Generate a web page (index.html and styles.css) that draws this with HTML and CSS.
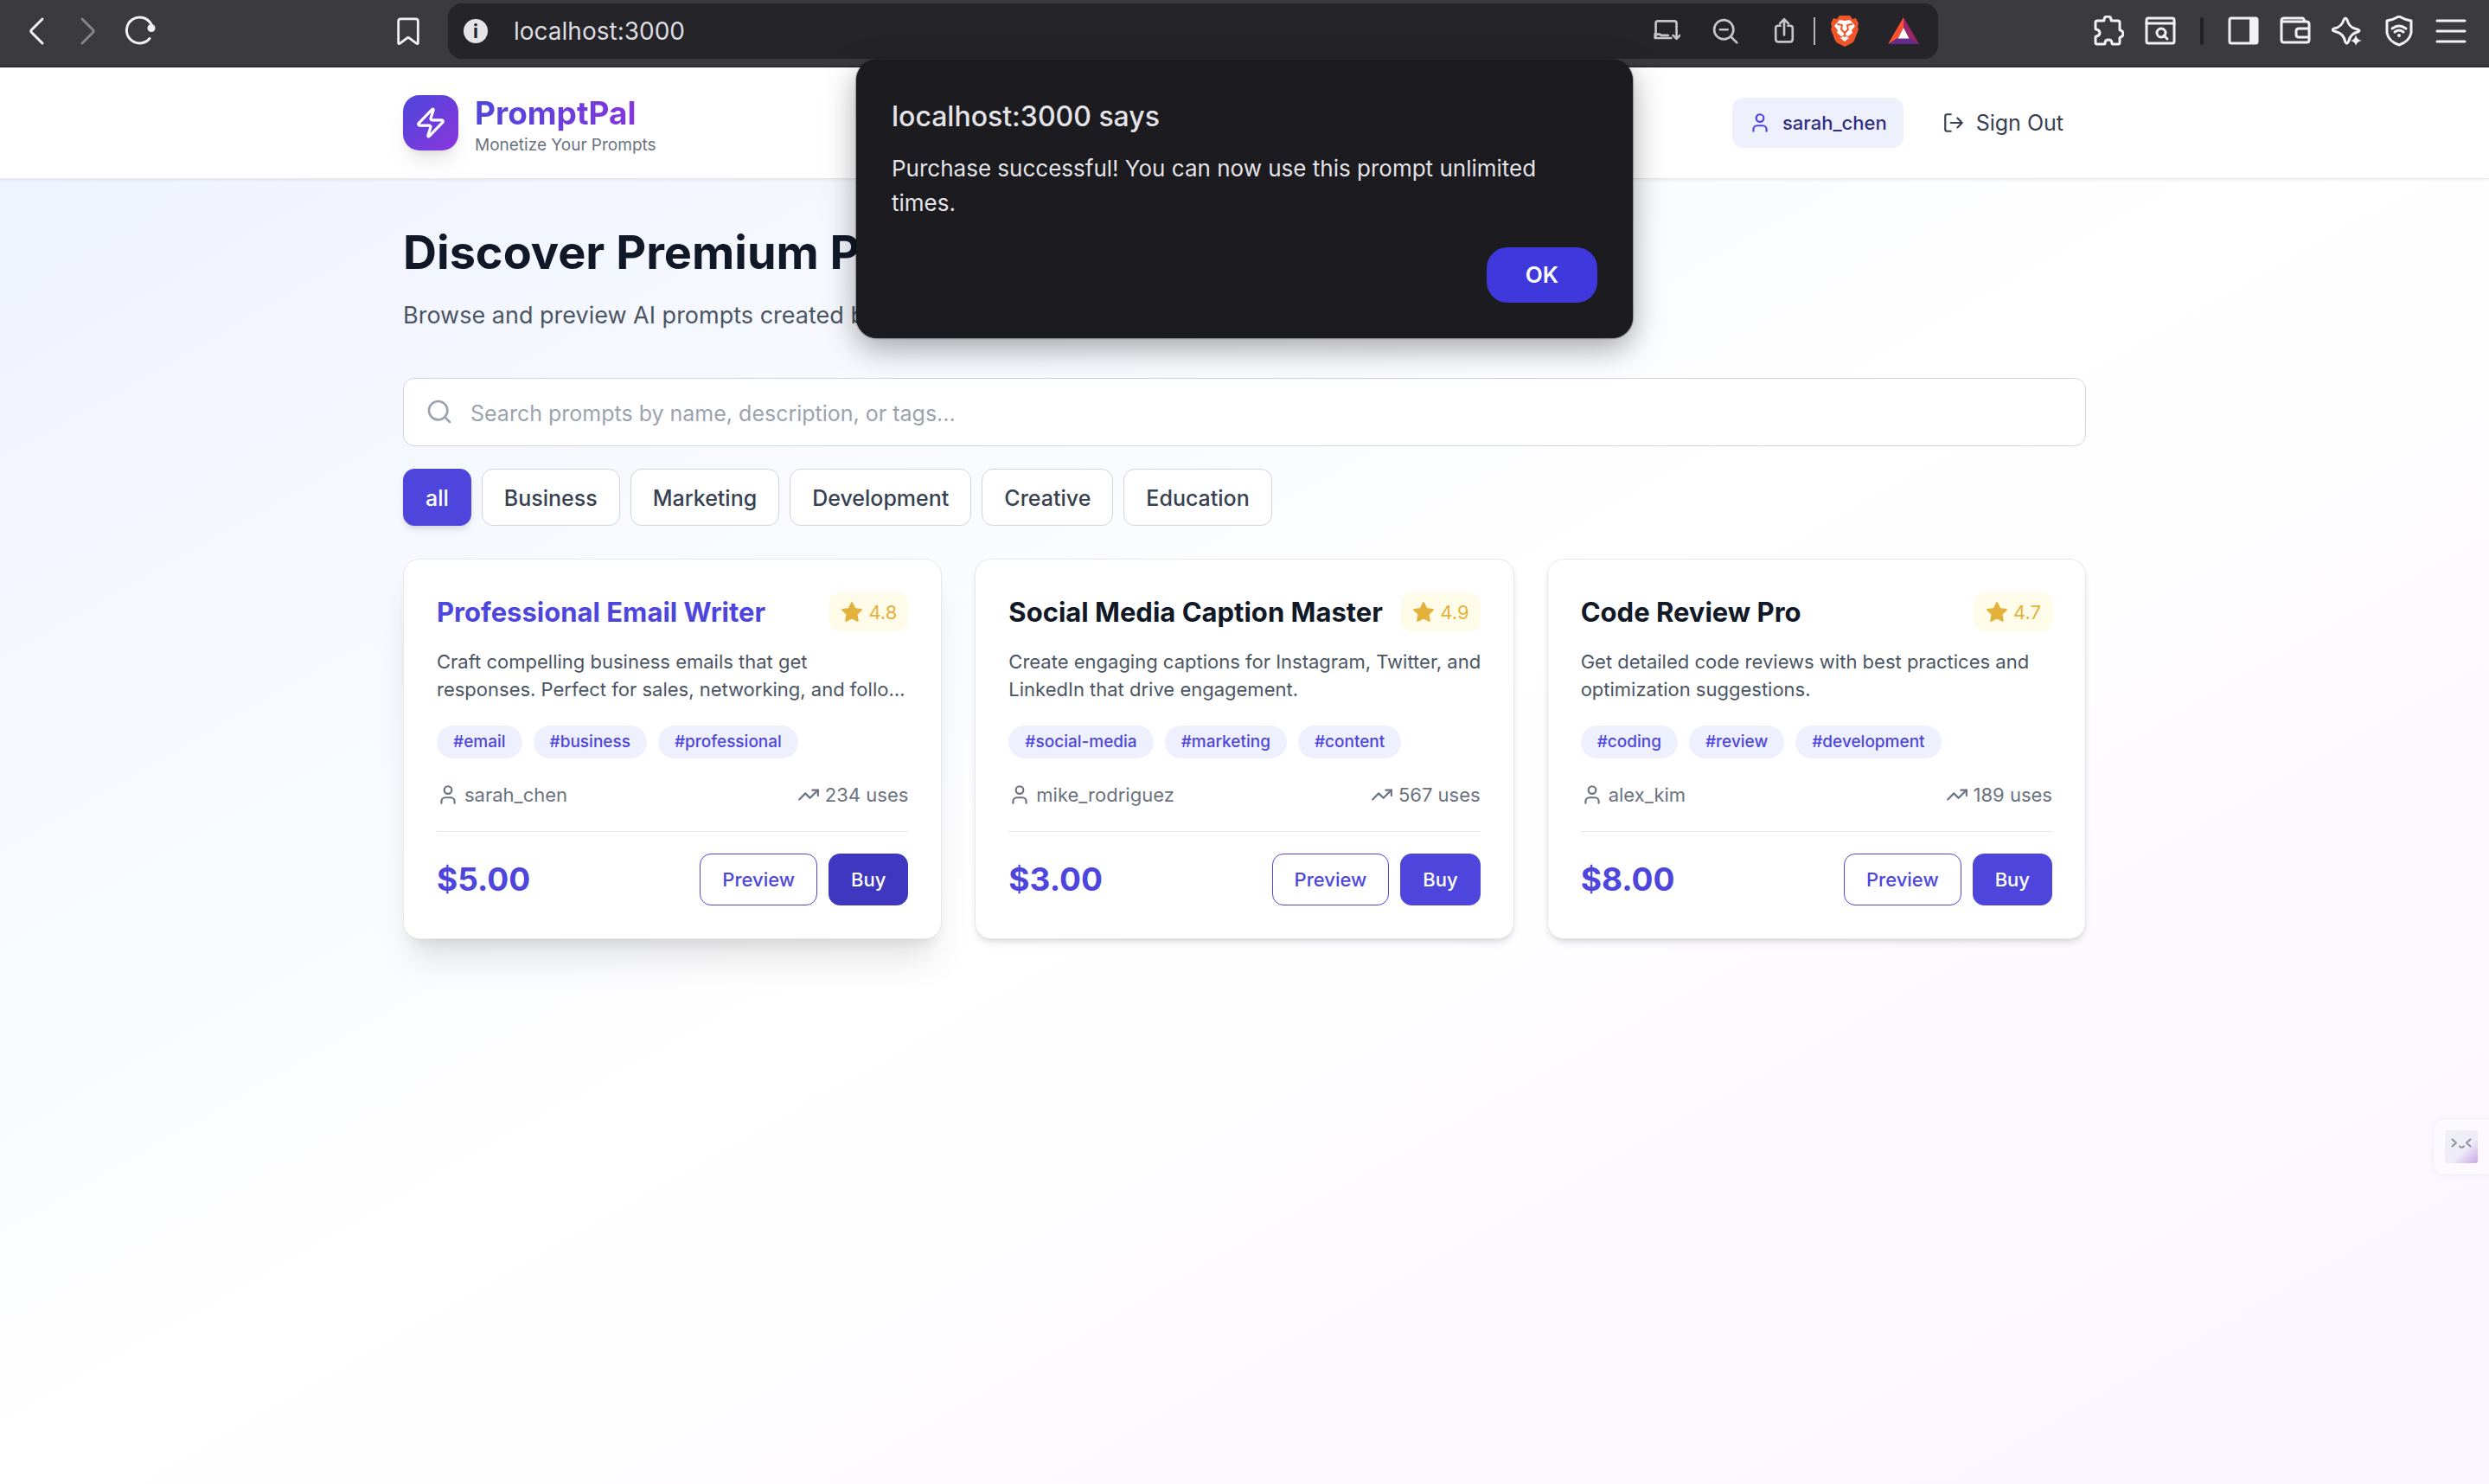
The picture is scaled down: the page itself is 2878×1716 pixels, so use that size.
FILE: index.html
```html
<!doctype html>
<html lang="en">

<head>
	<meta charset="utf-8">
	<title>PromptPal</title>
	<link rel="stylesheet" href="styles.css">
</head>

<body>
	<!-- shared icons -->
	<svg class="defs" aria-hidden="true">
		<symbol id="i-user" viewBox="0 0 24 24">
			<path d="M19 21v-2a4 4 0 0 0-4-4H9a4 4 0 0 0-4 4v2" />
			<circle cx="12" cy="7" r="4" />
		</symbol>
		<symbol id="i-trend" viewBox="0 0 24 24">
			<path d="M22 7l-8.500 8.500-5-5L2 17" />
			<path d="M16 7h6v6" />
		</symbol>
		<symbol id="i-star" viewBox="0 0 24 24">
			<path fill="currentColor" d="M12 2l3.090 6.260L22 9.270l-5 4.870 1.180 6.880L12 17.770l-6.180 3.250L7 14.140 2 9.270l6.910-1.010z" />
		</symbol>
	</svg>

	<div class="toolbar">
		<button class="tool" aria-label="Back"><svg viewBox="0 0 36 36"><path d="M25 4L12.500 16.500q-1.500 1.500 0 3L25 32" /></svg></button>
		<button class="tool dim" aria-label="Forward"><svg viewBox="0 0 36 36"><path d="M11 4l12.500 12.500q1.500 1.500 0 3L11 32" /></svg></button>
		<button class="tool" aria-label="Reload"><svg viewBox="0 0 36 36"><path d="M29 26.500A15 15 0 1 1 31 10.500" /><circle class="solid" cx="31" cy="14.500" r="4.500" /></svg></button>
		<button class="tool bookmark" aria-label="Bookmark"><svg viewBox="0 0 36 36"><path d="M9 3h18q3 0 3 3v26q0 2.500-2 1l-8.500-6.500q-1.500-1-3 0L8 33q-2 1.500-2-1V6q0-3 3-3z" /></svg></button>
		<div class="address">
			<span class="info" aria-hidden="true">i</span>
			<input class="url" type="text" value="localhost:3000" aria-label="Address">
			<button class="tool" aria-label="Install"><svg viewBox="0 0 36 36"><path d="M31 14V8q0-3-3-3H7Q4 5 4 8v18M3 22h6l2 1.500h9M3 22v5h21" /><path d="M31 16v11M26.500 23.500L31 28l4.500-4.500" /></svg></button>
			<button class="tool" aria-label="Zoom out"><svg viewBox="0 0 36 36"><circle cx="16" cy="16" r="12.500" /><path d="M25 25l8 8M11 16h10" /></svg></button>
			<button class="tool" aria-label="Share"><svg viewBox="0 0 36 36"><path d="M13 11h-3q-3 0-3 3v14q0 4 4 4h14q4 0 4-4V14q0-3-3-3h-3M18 23V3M12.500 8L18 2.500 23.500 8" /></svg></button>
			<span class="rule"></span>
			<button class="tool shield" aria-label="Brave Shields"><svg viewBox="0 0 36 36"><path fill="#f1562b" d="M12 0h12l3 4 4-1 3 6-1 4 1 3-5 13q-1 2-3 3l-8 4-8-4q-2-1-3-3L2 16l1-3-1-4 3-6 4 1z" /><path fill="#fff" d="M18 6l6-1 6 7-4 5 1 3-5 4-4-2-4 2-5-4 1-3-4-5 6-7zM18 23l5 3-5 4-5-4z" /><path fill="none" stroke="#f1562b" stroke-width="2" d="M10 10l5 1-1 5 4 4 4-4-1-5 5-1M18 20v4" /></svg></button>
			<button class="tool bat" aria-label="Rewards"><svg viewBox="0 0 36 36"><path fill="#ff5130" d="M18 2v12l-6.500 12L0 33z" /><path fill="#9e2668" d="M18 2v12l6.500 12L36 33z" /><path fill="#632d8e" d="M0 33l11.500-7h13L36 33z" /><path fill="#fff" d="M18 14l6.500 12.500h-13z" /></svg></button>
		</div>
		<div class="extras">
			<button class="tool" aria-label="Extensions"><svg viewBox="0 0 36 36"><path d="M5 6h7q1 0 1-1 0-4 4-4t4 4q0 1 1 1h7q2 0 2 2v8q0 1 1 1 3 1 3 4t-3 4q-1 0-1 1v5q0 2-2 2h-6q-1 0-1-1 0-4-4-4t-4 4q0 1-1 1H5q-2 0-2-2v-6q0-1 1-1 4-1 4-4t-4-4q-1 0-1-1V8q0-2 2-2z" /></svg></button>
			<button class="tool" aria-label="Search tabs"><svg viewBox="0 0 36 36"><rect x="2" y="3" width="32" height="29" rx="2" /><path d="M2 9h32M22 23l4 4" /><circle cx="19" cy="20" r="5" /></svg></button>
			<span class="rule"></span>
			<button class="tool" aria-label="Sidebar"><svg viewBox="0 0 36 36"><rect x="2" y="3" width="32" height="29" rx="2" /><path class="solid" d="M25 3h9v29h-9z" /></svg></button>
			<button class="tool" aria-label="Wallet"><svg viewBox="0 0 36 36"><path d="M4 7h27q3 0 3 3v18q0 3-3 3H5q-3 0-3-3V6q0-3 3-3h21q2 0 3 4M34 15H22q-3 0-3 3v4q0 3 3 3h12" /></svg></button>
			<button class="tool" aria-label="Assistant"><svg viewBox="0 0 36 36"><path d="M14 5q2-4 4 0 2 8 9 10 8 2 3 4-8 2-10 10-2 5-4 2-2-10-10-12-8-2-3-4 9-2 11-10z" /><path class="solid" d="M28 22q1 6 7 7-6 1-7 6-1-5-6-6 5-1 6-7z" /></svg></button>
			<button class="tool" aria-label="VPN"><svg viewBox="0 0 36 36"><path d="M18 1q7 4 14 5v14q-2 10-14 14Q6 30 4 20V6q7-1 14-5z" /><path d="M10 15q8-6 16 0M13 19q5-4 10 0" /><circle class="solid" cx="18" cy="23" r="2" /></svg></button>
			<button class="tool" aria-label="Menu"><svg viewBox="0 0 36 36"><path d="M2 6h32M2 18h32M2 30h32" /></svg></button>
		</div>
	</div>

	<div class="page">
		<header class="header">
			<div class="container header-row">
				<div class="brand">
					<div class="logo"><svg viewBox="0 0 24 24"><path d="M4 14a1 1 0 0 1-.780-1.630l9.900-10.200a.5.5 0 0 1 .860.460l-1.920 6.020A1 1 0 0 0 13 10h7a1 1 0 0 1 .780 1.630l-9.900 10.200a.5.5 0 0 1-.860-.460l1.920-6.020A1 1 0 0 0 11 14z" /></svg></div>
					<div class="brand-text">
						<div class="brand-name">PromptPal</div>
						<div class="brand-sub">Monetize Your Prompts</div>
					</div>
				</div>
				<div class="account">
					<div class="user-chip"><svg class="icon"><use href="#i-user" /></svg>sarah_chen</div>
					<button class="signout"><svg class="icon" viewBox="0 0 24 24"><path d="M9 21H5a2 2 0 0 1-2-2V5a2 2 0 0 1 2-2h4M16 17l5-5-5-5M21 12H9" /></svg>Sign Out</button>
				</div>
			</div>
		</header>

		<main class="container main">
			<h1>Discover Premium Prompts</h1>
			<p class="lead">Browse and preview AI prompts created by experts</p>

			<div class="search">
				<svg viewBox="0 0 24 24"><circle cx="11" cy="11" r="8" /><path d="M21 21l-4.300-4.300" /></svg>
				<input type="text" placeholder="Search prompts by name, description, or tags..." aria-label="Search prompts">
			</div>

			<div class="filters">
				<button class="filter active">all</button>
				<button class="filter">Business</button>
				<button class="filter">Marketing</button>
				<button class="filter">Development</button>
				<button class="filter">Creative</button>
				<button class="filter">Education</button>
			</div>

			<div class="cards">
				<article class="card hovered">
					<div class="card-head">
						<h3>Professional Email Writer</h3>
						<span class="rating"><svg class="icon"><use href="#i-star" /></svg>4.8</span>
					</div>
					<p class="desc">Craft compelling business emails that get<br>responses. Perfect for sales, networking, and follo…</p>
					<div class="tags"><span>#email</span><span>#business</span><span>#professional</span></div>
					<div class="meta">
						<span><svg class="icon"><use href="#i-user" /></svg>sarah_chen</span>
						<span><svg class="icon"><use href="#i-trend" /></svg>234 uses</span>
					</div>
					<div class="card-foot">
						<span class="price">$5.00</span>
						<button class="preview">Preview</button>
						<button class="buy">Buy</button>
					</div>
				</article>

				<article class="card">
					<div class="card-head">
						<h3>Social Media Caption Master</h3>
						<span class="rating"><svg class="icon"><use href="#i-star" /></svg>4.9</span>
					</div>
					<p class="desc">Create engaging captions for Instagram, Twitter, and LinkedIn that drive engagement.</p>
					<div class="tags"><span>#social-media</span><span>#marketing</span><span>#content</span></div>
					<div class="meta">
						<span><svg class="icon"><use href="#i-user" /></svg>mike_rodriguez</span>
						<span><svg class="icon"><use href="#i-trend" /></svg>567 uses</span>
					</div>
					<div class="card-foot">
						<span class="price">$3.00</span>
						<button class="preview">Preview</button>
						<button class="buy">Buy</button>
					</div>
				</article>

				<article class="card">
					<div class="card-head">
						<h3>Code Review Pro</h3>
						<span class="rating"><svg class="icon"><use href="#i-star" /></svg>4.7</span>
					</div>
					<p class="desc">Get detailed code reviews with best practices and optimization suggestions.</p>
					<div class="tags"><span>#coding</span><span>#review</span><span>#development</span></div>
					<div class="meta">
						<span><svg class="icon"><use href="#i-user" /></svg>alex_kim</span>
						<span><svg class="icon"><use href="#i-trend" /></svg>189 uses</span>
					</div>
					<div class="card-foot">
						<span class="price">$8.00</span>
						<button class="preview">Preview</button>
						<button class="buy">Buy</button>
					</div>
				</article>
			</div>
		</main>
	</div>

	<div class="dialog" role="alertdialog" aria-labelledby="dialog-title">
		<h2 id="dialog-title">localhost:3000 says</h2>
		<p>Purchase successful! You can now use this prompt unlimited times.</p>
		<button>OK</button>
	</div>

	<button class="helper" aria-label="Open helper">
		<svg viewBox="0 0 38 38">
			<defs>
				<linearGradient id="face" x1="0" y1="0" x2="1" y2="1">
					<stop offset="0" stop-color="#eff2f6" />
					<stop offset=".6" stop-color="#eeebf6" />
					<stop offset="1" stop-color="#c9a6ea" />
				</linearGradient>
			</defs>
			<rect width="38" height="38" rx="3" fill="url(#face)" />
			<path d="M8.500 10.500l4.500 4-4.500 4M29.500 10.500l-4.500 4 4.500 4M17 18.500q2.500 2.500 5 0" />
		</svg>
	</button>
</body>

</html>
```
FILE: styles.css
```css
* {
	box-sizing: border-box;
}

body {
	margin: 0;
	min-height: 100vh;
	display: flex;
	flex-direction: column;
	position: relative;
	overflow-x: hidden;
	font-family: Inter, "Liberation Sans", sans-serif;
	font-size: 22px;
	line-height: 32px;
	color: #111827;
}

h1,
h2,
h3,
p {
	margin: 0;
}

button,
input {
	font: inherit;
	color: inherit;
	margin: 0;
	padding: 0;
	border: 0;
	background: none;
}

svg {
	display: block;
	flex: none;
	fill: none;
	stroke: currentColor;
	stroke-width: 2;
	stroke-linecap: round;
	stroke-linejoin: round;
}

.defs {
	position: absolute;
	width: 0;
	height: 0;
}

.icon {
	width: 26px;
	height: 26px;
}

/* browser bar */
.toolbar {
	display: flex;
	align-items: center;
	height: 78px;
	padding: 0 14px 4px 12px;
	background: #3b3a3f;
	border-bottom: 2px solid #2c2b30;
	color: #f2f2f5;
}

.tool {
	width: 60px;
	height: 60px;
	display: flex;
	align-items: center;
	justify-content: center;
}

.tool svg {
	width: 36px;
	height: 36px;
}

.dim {
	color: #858489;
}

.solid {
	fill: currentColor;
	stroke: none;
}

.toolbar svg {
	stroke-width: 3;
}

.bookmark {
	margin-left: 250px;
	margin-right: 16px;
}

.bookmark svg {
	width: 34px;
	height: 34px;
}

.address {
	flex: 1;
	display: flex;
	align-items: center;
	height: 64px;
	padding: 0 6px 0 18px;
	border-radius: 16px;
	background: #252429;
	color: #c4c4c9;
}

.address .tool {
	width: 68px;
}

.address .tool svg {
	width: 32px;
	height: 32px;
}

.address .rule {
	width: 2px;
	height: 32px;
	background: #b5b5ba;
}

.address .bat svg,
.address .shield svg {
	width: 36px;
	height: 36px;
	stroke: none;
}

.info {
	width: 28px;
	height: 28px;
	border-radius: 50%;
	background: #e3e3e8;
	color: #252429;
	font-size: 22px;
	font-weight: 700;
	line-height: 28px;
	text-align: center;
}

.url {
	flex: 1;
	min-width: 0;
	margin-left: 30px;
	font-size: 28px;
	color: #dcdce0;
}

.extras {
	display: flex;
	align-items: center;
	margin-left: 167px;
}

.extras .rule {
	width: 4px;
	height: 32px;
	margin: 0 16px;
	border-radius: 2px;
	background: #222126;
}

/* app */
.page {
	flex: 1;
	background: linear-gradient(to bottom right, #eef2ff, #fff 50%, #faf5ff);
}

.container {
	width: 100%;
	max-width: 2048px;
	margin: 0 auto;
	padding: 0 51px;
}

.header {
	background: #fff;
	border-bottom: 1px solid #e5e7eb;
	box-shadow: 0 1px 4px rgba(0, 0, 0, .08);
}

.header-row {
	height: 128px;
	display: flex;
	align-items: center;
	justify-content: space-between;
}

.brand,
.account {
	display: flex;
	align-items: center;
	gap: 19px;
}

.logo {
	width: 64px;
	height: 64px;
	display: grid;
	place-items: center;
	border-radius: 19px;
	background: linear-gradient(to bottom right, #4e46dc, #8a35dc);
	box-shadow: 0 16px 24px -5px rgba(0, 0, 0, .1), 0 6px 10px -6px rgba(0, 0, 0, .1);
	color: #fff;
}

.logo svg {
	width: 38px;
	height: 38px;
}

.brand-text {
	padding-top: 4px;
}

.brand-name {
	font-size: 37px;
	font-weight: 700;
	line-height: 48px;
	background: linear-gradient(to right, #4e46dc, #8a35dc);
	-webkit-background-clip: text;
	background-clip: text;
	color: transparent;
}

.brand-sub {
	font-size: 19px;
	line-height: 26px;
	color: #6b7280;
}

.user-chip {
	display: flex;
	align-items: center;
	gap: 13px;
	height: 58px;
	padding: 0 19px;
	border-radius: 13px;
	background: #eef0fe;
	color: #312e81;
	font-weight: 500;
}

.user-chip svg {
	color: #4e46dc;
}

.signout {
	display: flex;
	align-items: center;
	gap: 13px;
	padding: 13px 26px;
	font-size: 25px;
	color: #374151;
}

.main {
	padding-top: 51px;
	padding-bottom: 51px;
}

h1 {
	font-size: 54px;
	font-weight: 700;
	line-height: 68px;
	margin-bottom: 16px;
}

.lead {
	font-size: 27px;
	line-height: 45px;
	color: #4b5563;
	margin-bottom: 50px;
}

.search {
	position: relative;
	margin-bottom: 26px;
}

.search svg {
	position: absolute;
	left: 26px;
	top: 23px;
	width: 32px;
	height: 32px;
	color: #9ca3af;
}

.search input {
	display: block;
	width: 100%;
	height: 79px;
	padding: 2px 26px 0 77px;
	border: 1px solid #d1d5db;
	border-radius: 13px;
	background: #fff;
	font-size: 25px;
}

.search input::placeholder {
	color: #9ca3af;
}

.filters {
	display: flex;
	flex-wrap: wrap;
	gap: 12px;
	margin-bottom: 38px;
}

.filter {
	height: 66px;
	padding: 1px 25px 0;
	border: 1px solid #d1d5db;
	border-radius: 13px;
	background: #fff;
	font-size: 25px;
	font-weight: 500;
	color: #374151;
}

.filter.active {
	border-color: #4e46dc;
	background: #4e46dc;
	color: #fff;
	box-shadow: 0 6px 10px -2px rgba(0, 0, 0, .1), 0 3px 6px -3px rgba(0, 0, 0, .1);
}

.cards {
	display: grid;
	grid-template-columns: repeat(3, 1fr);
	gap: 38px;
}

.card {
	padding: 38px;
	border: 1px solid #e5e7eb;
	border-radius: 19px;
	background: #fff;
	box-shadow: 0 6px 10px -2px rgba(0, 0, 0, .1), 0 3px 6px -3px rgba(0, 0, 0, .1);
}

.card.hovered {
	box-shadow: 0 32px 40px -8px rgba(0, 0, 0, .1), 0 13px 16px -10px rgba(0, 0, 0, .1);
}

.hovered h3 {
	color: #4e46dc;
}

.card-head {
	display: flex;
	align-items: center;
	justify-content: space-between;
	margin-bottom: 19px;
}

h3 {
	font-size: 31px;
	font-weight: 700;
	line-height: 45px;
	white-space: nowrap;
}

.rating {
	display: flex;
	align-items: center;
	gap: 6px;
	height: 45px;
	padding: 0 13px;
	border-radius: 13px;
	background: #fefce8;
	color: #e3b23c;
}

/* runs a little past the column so full lines stay whole */
.desc {
	min-height: 64px;
	margin-right: -10px;
	margin-bottom: 26px;
	color: #4b5563;
}

.tags {
	display: flex;
	gap: 13px;
	margin-bottom: 26px;
}

.tags span {
	padding: 6px 19px;
	border-radius: 19px;
	background: #eef0fe;
	color: #4e46dc;
	font-size: 19px;
	font-weight: 500;
	line-height: 26px;
}

.meta {
	display: flex;
	justify-content: space-between;
	padding-bottom: 26px;
	border-bottom: 1px solid #e5e7eb;
	color: #6b7280;
}

.meta span {
	display: flex;
	align-items: center;
	gap: 6px;
}

.card-foot {
	display: flex;
	align-items: center;
	gap: 13px;
	padding-top: 25px;
}

.price {
	flex: 1;
	font-size: 37px;
	font-weight: 700;
	color: #4e46dc;
}

.preview,
.buy {
	height: 60px;
	padding: 0 25px;
	border: 1px solid #4e46dc;
	border-radius: 13px;
	font-weight: 500;
	color: #4e46dc;
}

.buy {
	background: #4e46dc;
	color: #fff;
}

.hovered .buy {
	border-color: #4037c0;
	background: #4037c0;
}

/* alert, sits over the page and the bar */
.dialog {
	position: absolute;
	top: 69px;
	left: 50%;
	transform: translateX(-50%);
	width: 898px;
	padding: 42px 41px 41px;
	display: flex;
	flex-direction: column;
	border-radius: 24px;
	background: #1c1b1f;
	box-shadow: 0 0 2px #000, 0 12px 36px rgba(0, 0, 0, .35);
	color: #e4e3e8;
}

.dialog h2 {
	font-size: 32px;
	font-weight: 500;
	line-height: 48px;
	margin-bottom: 16px;
}

.dialog p {
	font-size: 26px;
	line-height: 40px;
	margin-bottom: 31px;
}

.dialog button {
	align-self: flex-end;
	width: 128px;
	height: 64px;
	border-radius: 24px;
	background: #3f39dd;
	color: #fff;
	font-size: 26px;
	font-weight: 600;
}

.helper {
	position: absolute;
	right: 0;
	top: 1293px;
	padding: 13px;
	border: 1px solid #f3eff8;
	border-right: 0;
	border-radius: 13px 0 0 13px;
	background: #fcfaff;
	box-shadow: 0 0 6px rgba(0, 0, 0, .03);
	color: #8f8f9b;
}

.helper svg {
	width: 38px;
	height: 38px;
}

.helper rect {
	stroke: none;
}
```
